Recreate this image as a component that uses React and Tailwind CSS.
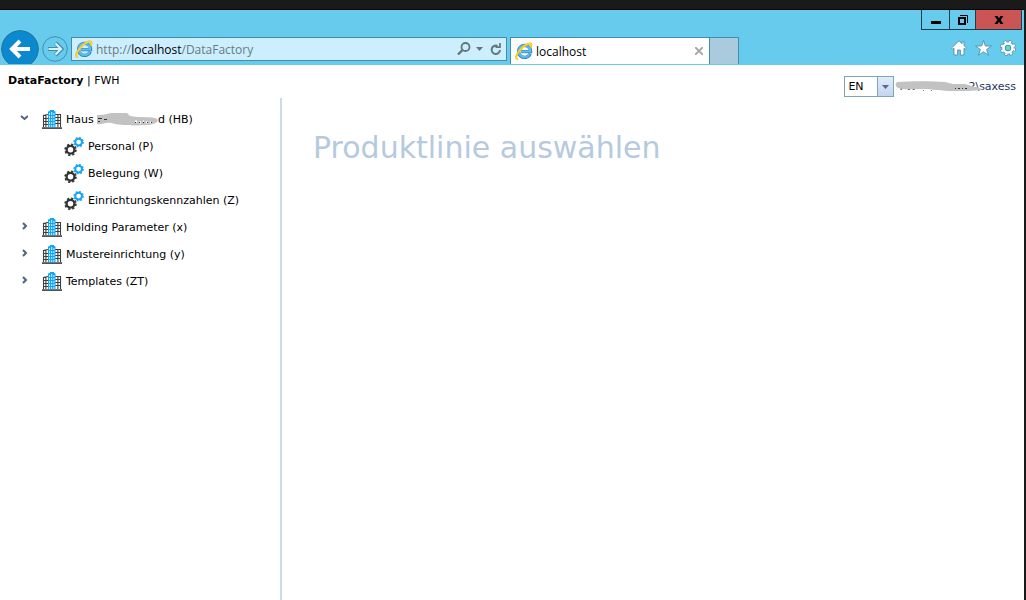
import React, { useState } from "react";

function IeLogo() {
  return (
    <svg viewBox="0 0 18 18" className="size-[18px] shrink-0" aria-hidden="true">
      <path d="M15.2 11.6A6 6 0 1 1 15.6 9.6H6.2" fill="none" stroke="#2f86c2" strokeWidth="3.3" />
      <path d="M14.7 11.6A5.7 5.7 0 1 1 15.2 9.5H6.2" fill="none" stroke="#5cbcee" strokeWidth="2.2" />
      <path
        d="M3 16.6C.2 17.3.6 13.6 4.1 9.1C7.8 4.3 13.2.6 15.6 1.7C16.8 2.2 16.5 3.8 15.6 5.5"
        fill="none"
        stroke="#e8af1c"
        strokeWidth="2"
      />
      <path
        d="M3 16.6C.2 17.3.6 13.6 4.1 9.1C7.8 4.3 13.2.6 15.6 1.7C16.8 2.2 16.5 3.8 15.6 5.5"
        fill="none"
        stroke="#ffd52e"
        strokeWidth="1.4"
      />
    </svg>
  );
}

function BuildingIcon() {
  return (
    <svg viewBox="0 0 20 20" className="h-5 w-5 shrink-0" fill="none" aria-hidden="true">
      <path d="M0 17.2H20V19H0Z" fill="#505254" />
      <path d="M1.5 17V5.5L6 4.5M3.9 5V17M1 8.5H6M1 11.5H6M1 14.5H6" stroke="#3c3e40" strokeWidth="1.1" />
      <path d="M13 4.5H18.5V17M15.9 4V17M13 7.5H19M13 10.5H19M13 13.5H19" stroke="#3c3e40" strokeWidth="1.1" />
      <path d="M6 1.5L8 1V0H12V1L13.5 1.5V17.2H6Z" fill="#12a5f4" />
      <path
        d="M7 3H8V5H7ZM9.2 2H10.2V5H9.2ZM11.4 3H12.4V5H11.4ZM7 6H8V8H7ZM9.2 6H10.2V8H9.2ZM11.4 6H12.4V8H11.4ZM7 9H8V11H7ZM9.2 9H10.2V11H9.2ZM11.4 9H12.4V11H11.4ZM7 12H8V14H7ZM9.2 12H10.2V14H9.2ZM11.4 12H12.4V14H11.4ZM7 15H8V17H7ZM9.2 15H10.2V17H9.2ZM11.4 15H12.4V17H11.4Z"
        fill="#d3effd"
      />
    </svg>
  );
}

function GearsIcon() {
  return (
    <svg viewBox="0 0 20 20" className="h-5 w-5 shrink-0" fill="none" aria-hidden="true">
      <circle cx="6.5" cy="12.8" r="3.9" stroke="#333" strokeWidth="2.3" />
      <circle cx="6.5" cy="12.8" r="5.4" stroke="#333" strokeWidth="1.7" strokeDasharray="2.2 2.04" />
      <circle cx="14.6" cy="5.1" r="3.4" stroke="#12a5f4" strokeWidth="2" />
      <circle cx="14.6" cy="5.1" r="4.6" stroke="#12a5f4" strokeWidth="1.3" strokeDasharray="1.8 1.81" />
    </svg>
  );
}

function Chevron({ open }) {
  return (
    <svg viewBox="0 0 8 8" className="size-2" fill="none" stroke="#52617d" strokeWidth="2" aria-hidden="true">
      {open ? <path d="M1 2L4.5 5L8 2" /> : <path d="M3 1L6 4L3 7" />}
    </svg>
  );
}

function BrowserBar() {
  return (
    <header className="flex h-[55px] overflow-hidden bg-[#66cbed] font-['Open_Sans','Noto_Sans',sans-serif]">
      <nav aria-label="Browser" className="flex min-w-0 flex-1 items-start pt-5 pl-px">
        <button type="button" aria-label="Back" className="h-[34px] w-[38px] shrink-0 overflow-hidden">
          <svg viewBox="0 0 38 34" className="h-[34px] w-[38px]">
            <circle cx="19" cy="19" r="18.3" fill="#0a89cf" stroke="#276f94" />
            <path d="M29 19H11M19 11L11 19L19 27" fill="none" stroke="#fff" strokeWidth="4" />
          </svg>
        </button>
        <button type="button" aria-label="Forward" className="mt-1.5 ml-[3px] size-[26px] shrink-0">
          <svg viewBox="0 0 26 26" className="size-[26px]" fill="none">
            <circle cx="13" cy="13" r="12.3" stroke="#438fae" />
            <path d="M6 13H19M13.5 7L19.5 13L13.5 19" stroke="#418dac" strokeWidth="4" />
            <path d="M6.5 13H19M13.5 7.5L19 13L13.5 18.5" stroke="#d8f2fc" strokeWidth="2.2" />
          </svg>
        </button>
        <div className="mt-[7px] ml-[3px] flex h-6 w-[436px] min-w-0 items-center border border-[#438dac] bg-[#cceeff] pl-[3px]">
          <IeLogo />
          <div
            role="textbox"
            tabIndex={0}
            aria-label="Address"
            className="min-w-0 flex-1 truncate pt-0.5 pl-[3px] text-[12px] leading-5 text-[#667b80]"
          >
            http://<span className="text-black">localhost</span>/DataFactory
          </div>
          <button type="button" aria-label="Search" className="shrink-0">
            <svg viewBox="0 0 14 14" className="size-3.5" fill="none" stroke="#62777a">
              <circle cx="8.5" cy="5" r="4" strokeWidth="1.8" />
              <path d="M5.5 8L1 12.5" strokeWidth="2.4" />
            </svg>
          </button>
          <button type="button" aria-label="Address history" className="ml-[5px] shrink-0">
            <svg viewBox="0 0 7 4" className="h-1 w-[7px]"><path d="M0 0H7L3.5 4Z" fill="#62777a" /></svg>
          </button>
          <button type="button" aria-label="Refresh" className="mr-1 ml-[7px] shrink-0">
            <svg viewBox="0 0 12 14" className="h-3.5 w-3" fill="none" stroke="#62777a" strokeWidth="2">
              <path d="M10 8A4.2 4.2 0 1 1 7.5 4" />
              <path d="M5.5 5.2H10V1" strokeWidth="1.7" />
            </svg>
          </button>
        </div>
        <div className="mt-[7px] ml-[3px] flex h-[27px] w-[200px] min-w-0 items-center border border-b-0 border-[#438dac] bg-white pr-1.5 pl-1">
          <IeLogo />
          <span className="flex-1 truncate pt-0.5 pl-[3px] text-[12px] leading-5 text-black">localhost</span>
          <button type="button" aria-label="Close tab">
            <svg viewBox="0 0 8 8" className="size-2" stroke="#aaa" strokeWidth="2"><path d="M0 0L8 8M8 0L0 8" /></svg>
          </button>
        </div>
        <button
          type="button"
          aria-label="New tab"
          className="mt-[7px] h-[27px] w-[29px] shrink-0 border border-b-0 border-l-0 border-[#438dac] bg-[#a9cbdd]"
        />
      </nav>
      <div className="flex shrink-0 flex-col items-end pr-0.5">
        <div className="flex h-5 border border-t-0 border-[#213c47]">
          <button type="button" aria-label="Minimize" className="flex w-[27px] items-center justify-center">
            <svg viewBox="0 0 10 10" className="size-2.5"><path d="M0 6H10V9H0Z" fill="#000" /></svg>
          </button>
          <button type="button" aria-label="Restore" className="flex w-[26px] items-center justify-center border-l border-[#213c47]">
            <svg viewBox="0 0 10 10" className="size-2.5" fill="none" stroke="#000">
              <path d="M1 3H7V9H1Z" strokeWidth="2" />
              <path d="M2 .5H9.5V8" />
            </svg>
          </button>
          <button type="button" aria-label="Close" className="flex w-[46px] items-center justify-center border-l border-[#213c47] bg-[#cb5555]">
            <svg viewBox="0 0 10 8" className="h-2 w-2.5"><path d="M.5 0H3.5L5 2.2L6.5 0H9.5L6.7 4L9.5 8H6.5L5 5.8L3.5 8H.5L3.3 4Z" fill="#000" /></svg>
          </button>
        </div>
        <div className="mt-2.5 mr-1.5 flex gap-2">
          <button type="button" aria-label="Home">
            <svg viewBox="0 0 16 16" className="size-4" fill="#fff" stroke="#47879f" strokeWidth=".8">
              <path d="M8 .8L.5 8L1.8 9.3L3 8.2V15H6.6V10H9.4V15H13V8.2L14.2 9.3L15.5 8L13 5.6V1.8H11V3.7Z" />
            </svg>
          </button>
          <button type="button" aria-label="Favorites">
            <svg viewBox="0 0 17 16" className="h-4 w-[17px]" fill="#fff" stroke="#47879f" strokeWidth=".8">
              <path d="M8.5 .5L10.4 6H16.4L11.6 9.5L13.5 15.2L8.5 11.7L3.5 15.2L5.4 9.5L.6 6H6.6Z" />
            </svg>
          </button>
          <button type="button" aria-label="Tools">
            <svg viewBox="0 0 16 16" className="size-4" fill="none">
              <circle cx="8" cy="8" r="6.4" stroke="#47879f" strokeWidth="3.2" strokeDasharray="3 2.03" />
              <circle cx="8" cy="8" r="4.4" stroke="#47879f" strokeWidth="4" />
              <circle cx="8" cy="8" r="6.4" stroke="#fff" strokeWidth="2" strokeDasharray="2.2 2.83" strokeDashoffset="-.4" />
              <circle cx="8" cy="8" r="4.5" stroke="#fff" strokeWidth="2.6" />
            </svg>
          </button>
        </div>
      </div>
    </header>
  );
}

const units = [
  {
    id: "HB",
    redacted: true,
    children: ["Personal (P)", "Belegung (W)", "Einrichtungskennzahlen (Z)"],
  },
  { id: "x", label: "Holding Parameter (x)" },
  { id: "y", label: "Mustereinrichtung (y)" },
  { id: "ZT", label: "Templates (ZT)" },
];

function RedactedUnit() {
  return (
    <span className="relative flex">
      <span className="w-[92px] text-left">Haus</span>
      d (HB)
      <svg viewBox="0 0 63 14" className="absolute top-0 left-[30px] h-3.5 w-[63px]" aria-hidden="true">
        <path
          d="M1 2C6 2 12 1 15 0H31L34 3C43 5 56 3 61 6C64 9 57 12 50 12C36 13 22 12 15 10C9 9 6 12 1 11Z"
          fill="#c2c2c2"
        />
        <path d="M2 5.5H6M8 6.5H11M2 8.5H4" stroke="#333" />
        <path d="M39 8.5H41M43 9.5H45M47 8.5H48M50 9.5H52M54 9.5H55" stroke="#fff" strokeWidth="2" />
        <path d="M39 9.5H40M43 9.5H44M47 9.5H48M51 9.5H52M55 9.5H56" stroke="#333" />
      </svg>
    </span>
  );
}

function Tree() {
  const [open, setOpen] = useState({ HB: true });
  return (
    <ul className="pt-2">
      {units.map((unit) => (
        <li key={unit.id}>
          <div className="flex h-[27px] items-center pl-5">
            <button
              type="button"
              aria-label="Toggle"
              aria-expanded={!!open[unit.id]}
              onClick={() => setOpen({ ...open, [unit.id]: !open[unit.id] })}
              className="mb-1 flex w-[22px]"
            >
              <Chevron open={open[unit.id]} />
            </button>
            <button type="button" className="flex items-center gap-1 whitespace-nowrap">
              <BuildingIcon />
              {unit.redacted ? <RedactedUnit /> : unit.label}
            </button>
          </div>
          {open[unit.id] && unit.children && (
            <ul>
              {unit.children.map((label) => (
                <li key={label} className="flex h-[27px] items-center pl-16">
                  <button type="button" className="flex items-center gap-1 whitespace-nowrap">
                    <GearsIcon />
                    {label}
                  </button>
                </li>
              ))}
            </ul>
          )}
        </li>
      ))}
    </ul>
  );
}

export default function App() {
  return (
    <div className="flex min-h-screen flex-col border-t-[9px] border-r-2 border-t-[#1a1a1a] border-r-[#1a1a1a] bg-white font-['Verdana','DejaVu_Sans',sans-serif] text-[11px] leading-[14px] text-black">
      <div className="border-t border-black">
        <BrowserBar />
      </div>
      <div className="flex h-[33px] items-start justify-between pr-2 pl-2">
        <p className="pt-[9px]">
          <b>DataFactory</b> | FWH
        </p>
        <div className="flex items-start pt-[11px]">
          <div className="relative">
            <select
              aria-label="Language"
              defaultValue="EN"
              className="h-[21px] w-[50px] appearance-none rounded-none border border-[#7fa3b7] bg-white pl-[3px] text-[11px]"
            >
              <option>EN</option>
              <option>DE</option>
            </select>
            <span className="pointer-events-none absolute inset-y-0 right-0 flex w-[17px] items-center justify-center border border-[#7fa3b7] bg-linear-to-b from-[#e2ecfa] to-[#c3d6ee]">
              <svg viewBox="0 0 7 4" className="h-1 w-[7px]" aria-hidden="true"><path d="M0 0H7L3.5 4Z" fill="#536b91" /></svg>
            </span>
          </div>
          <p className="relative ml-px flex pt-1 pl-1 text-[#1c355e]">
            <span className="w-[69px]">FW</span>
            2\saxess
            <svg viewBox="0 0 90 14" className="absolute top-1 left-0 h-3.5 w-[90px]" aria-hidden="true">
              <path
                d="M2 2C16 1 38 1 50 2L58 4H70L80 7C84 7 86 8 87 10C80 11 66 11 58 11C46 11 38 9 28 9C17 9 8 10 3 8C0 6 0 4 2 2Z"
                fill="#c2c2c2"
              />
              <path d="M60 8.5H61M63 8.5H65M67 8.5H68M70 8.5H72" stroke="#1c355e" />
              <path d="M28 10.5H29M36 10.5H37" stroke="#6d7f9b" />
            </svg>
          </p>
        </div>
      </div>
      <div className="flex flex-1">
        <aside className="w-[282px] shrink-0 border-r-2 border-[#c8dcec]">
          <Tree />
        </aside>
        <main className="min-w-0 flex-1 px-[31px] pt-[31px]">
          <h1 className="text-[30px] leading-[38px] text-[#b5cadf]">Produktlinie auswählen</h1>
        </main>
      </div>
    </div>
  );
}
